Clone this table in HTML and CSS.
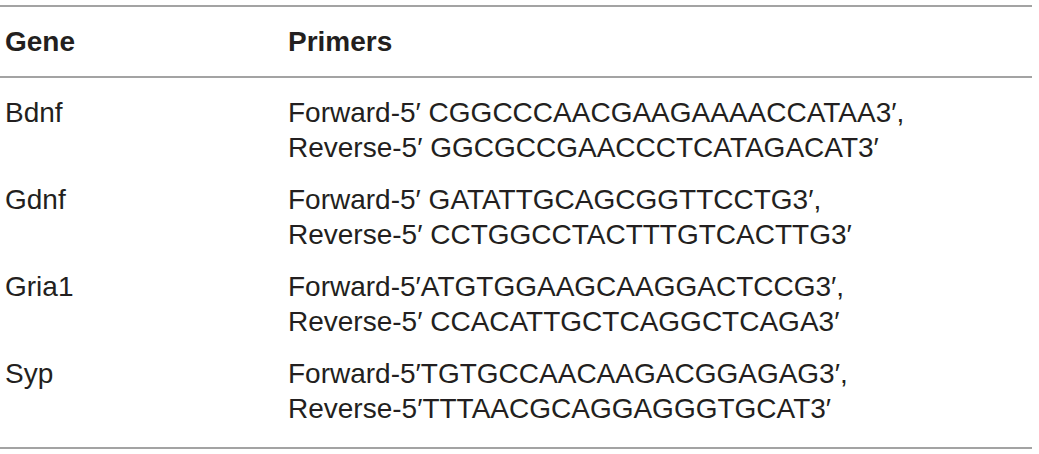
FILE: index.html
```html
<!DOCTYPE html>
<html lang="en">
<head>
<meta charset="utf-8">
<title>Primers</title>
<link rel="stylesheet" href="styles.css">
</head>
<body>
<table class="primers">
  <thead>
    <tr><th class="gene">Gene</th><th>Primers</th></tr>
  </thead>
  <tbody>
    <tr><td class="gene">Bdnf</td><td>Forward-5′ CGGCCCAACGAAGAAAACCATAA3′,<br>Reverse-5′ GGCGCCGAACCCTCATAGACAT3′</td></tr>
    <tr><td class="gene">Gdnf</td><td>Forward-5′ GATATTGCAGCGGTTCCTG3′,<br>Reverse-5′ CCTGGCCTACTTTGTCACTTG3′</td></tr>
    <tr><td class="gene">Gria1</td><td>Forward-5′ATGTGGAAGCAAGGACTCCG3′,<br>Reverse-5′ CCACATTGCTCAGGCTCAGA3′</td></tr>
    <tr><td class="gene">Syp</td><td>Forward-5′TGTGCCAACAAGACGGAGAG3′,<br>Reverse-5′TTTAACGCAGGAGGGTGCAT3′</td></tr>
  </tbody>
</table>
</body>
</html>
```
FILE: styles.css
```css
html, body {
  margin: 0;
  padding: 0;
  background: #ffffff;
}
body {
  padding-top: 5px;
  font-family: "Liberation Sans", Arial, sans-serif;
  color: #231f20;
}
.primers {
  width: 1032px;
  border-collapse: collapse;
  border-top: 2px solid #a3a3a3;
  border-bottom: 2px solid #a3a3a3;
  font-size: 28px;
  line-height: 35px;
}
.primers th {
  text-align: left;
  font-weight: bold;
  padding: 17px 4px 17px 4px;
  border-bottom: 2px solid #a3a3a3;
}
.primers td {
  vertical-align: top;
  padding: 9px 4px 8px 4px;
}
.primers tbody tr:first-child td {
  padding-top: 17px;
}
.primers tbody tr:last-child td {
  padding-bottom: 21px;
}
.primers .gene {
  width: 275px;
  padding-left: 5px;
}
```
